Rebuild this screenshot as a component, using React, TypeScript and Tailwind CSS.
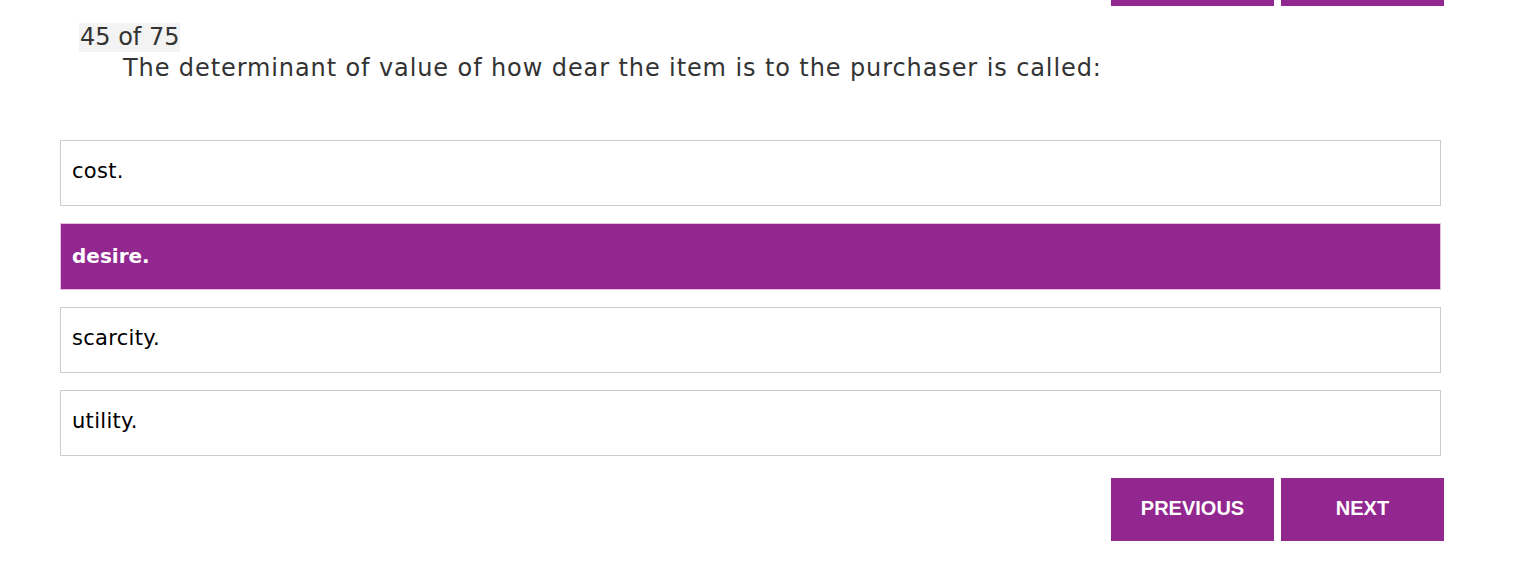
const options = ["cost.", "desire.", "scarcity.", "utility."];

const btn =
  "w-[163px] h-[63px] pb-[3px] bg-[#92278f] text-white font-bold text-[20px] font-['Liberation_Sans',Arial,sans-serif]";

export default function App() {
  const selected = 1;
  return (
    <div className="w-[1521px] h-[580px] bg-white overflow-hidden font-['DejaVu_Sans',sans-serif]">
      <div className="ml-[60px] w-[1381px]">
        {/* top nav, scrolled mostly out of view */}
        <div className="flex justify-end gap-[7px] mr-[-3px] mt-[-57px]">
          <div className={btn} />
          <div className={btn} />
        </div>
        <div className="mt-[17px] ml-[19px] h-[29px]">
          <span className="inline-block bg-[#f3f3f3] text-[#333] text-[24px] leading-[29px] px-[1px]">
            45 of 75
          </span>
        </div>
        <p className="mt-[2px] ml-[63px] text-[24px] leading-[29px] text-[#333] tracking-[0.9px]">
          The determinant of value of how dear the item is to the purchaser is called:
        </p>
        <div className="mt-[57px] flex flex-col gap-[17px]">
          {options.map((o, i) => (
            <div
              key={o}
              className={
                i === selected
                  ? "h-[67px] flex items-center px-[11px] pb-[2px] border border-[#e6bfe3] bg-[#92278f] text-white font-bold text-[20px]"
                  : "h-[66px] flex items-center px-[11px] pb-[2px] border border-[#cccccc] bg-white text-black text-[21px] tracking-[0.3px]"
              }
            >
              {o}
            </div>
          ))}
        </div>
        <div className="flex justify-end gap-[7px] mr-[-3px] mt-[22px]">
          <button className={btn}>PREVIOUS</button>
          <button className={btn}>NEXT</button>
        </div>
      </div>
    </div>
  );
}
